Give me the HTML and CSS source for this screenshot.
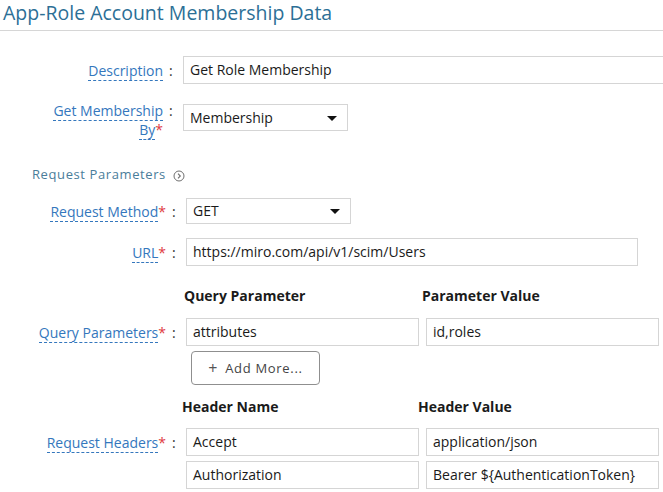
FILE: index.html
```html
<!DOCTYPE html>
<html>
<head>
<meta charset="utf-8">
<link rel="stylesheet" href="styles.css">
</head>
<body>
<div class="page">
  <h1 class="title">App-Role Account Membership Data</h1>

  <div class="section s1">
    <div class="row r-desc">
      <div class="lbl"><div class="lbl-text"><span class="u">Description</span></div><div class="colon">:</div></div>
      <div class="input wide">Get Role Membership</div>
    </div>
    <div class="row r-by top">
      <div class="lbl"><div class="lbl-text"><span class="u">Get Membership<br>By</span><span class="req">*</span></div><div class="colon">:</div></div>
      <div class="input select sel1">Membership<span class="caret"></span></div>
    </div>
  </div>

  <div class="subhead">Request Parameters
    <svg class="info" width="12" height="12" viewBox="0 0 12 12"><circle cx="6" cy="6" r="5" fill="none" stroke="#6f6f6f" stroke-width="1"/><polyline points="5,3.6 7.3,6 5,8.4" fill="none" stroke="#6f6f6f" stroke-width="1.1"/></svg>
  </div>

  <div class="section s2">
    <div class="row r-method">
      <div class="lbl"><div class="lbl-text"><span class="u">Request Method</span><span class="req">*</span></div><div class="colon">:</div></div>
      <div class="input select sel2">GET<span class="caret"></span></div>
    </div>
    <div class="row r-url">
      <div class="lbl"><div class="lbl-text"><span class="u">URL</span><span class="req">*</span></div><div class="colon">:</div></div>
      <div class="input url">https://miro.com/api/v1/scim/Users</div>
    </div>

    <div class="colheads ch-query">
      <div class="ch ch1">Query Parameter</div>
      <div class="ch ch2">Parameter Value</div>
    </div>
    <div class="row r-query top">
      <div class="lbl lbl-pair"><div class="lbl-text"><span class="u">Query Parameters</span><span class="req">*</span></div><div class="colon">:</div></div>
      <div class="pairs">
        <div class="pair">
          <div class="input half">attributes</div>
          <div class="input half">id,roles</div>
        </div>
        <button class="addmore"><span class="plus">+</span>Add More...</button>
      </div>
    </div>

    <div class="colheads ch-header">
      <div class="ch ch1">Header Name</div>
      <div class="ch ch2">Header Value</div>
    </div>
    <div class="row r-headers top">
      <div class="lbl lbl-pair"><div class="lbl-text"><span class="u">Request Headers</span><span class="req">*</span></div><div class="colon">:</div></div>
      <div class="pairs">
        <div class="pair">
          <div class="input half">Accept</div>
          <div class="input half">application/json</div>
        </div>
        <div class="pair">
          <div class="input half">Authorization</div>
          <div class="input half">Bearer ${AuthenticationToken}</div>
        </div>
      </div>
    </div>
  </div>
</div>
</body>
</html>
```
FILE: styles.css
```css
html, body {
  margin: 0;
  padding: 0;
  background: #ffffff;
  overflow: hidden;
}
body {
  font-family: "Open Sans", "Liberation Sans", sans-serif;
  color: #222222;
  width: 663px;
  height: 492px;
}
.page {
  width: 663px;
}
.title {
  margin: 0;
  padding: 0 0 4px 3px;
  font-size: 19.5px;
  line-height: 26px;
  font-weight: 400;
  color: #2c6f96;
  border-bottom: 1px solid #d6d6d6;
}
.row {
  display: flex;
  align-items: center;
}
.row.top {
  align-items: flex-start;
}
.lbl {
  display: flex;
  align-items: flex-start;
  flex: none;
}
.lbl-text {
  width: 163px;
  text-align: right;
  font-size: 14px;
  line-height: 19px;
  color: #3477bd;
}
.u {
  border-bottom: 1px dashed #3477bd;
  padding-bottom: 0;
}
.req {
  color: #e0393e;
}
.colon {
  width: 14px;
  padding-left: 6px;
  font-size: 14px;
  line-height: 19px;
  color: #333;
}
.input {
  box-sizing: border-box;
  height: 28px;
  border: 1px solid #d5d5d5;
  background: #fff;
  padding: 0 6px;
  font-size: 14px;
  line-height: 26px;
  color: #1a1a1a;
  white-space: nowrap;
  overflow: hidden;
  flex: none;
}
.wide {
  width: 500px;
}
.select {
  position: relative;
  width: 165px;
}
.sel1 {
  height: 27px;
  line-height: 25px;
}
.sel2 {
  height: 26px;
  line-height: 24px;
}
.caret {
  position: absolute;
  right: 10px;
  top: 50%;
  margin-top: -2px;
  width: 0;
  height: 0;
  border-left: 5px solid transparent;
  border-right: 5px solid transparent;
  border-top: 5px solid #111;
}
.url {
  width: 452px;
}
.s1 .r-desc {
  margin-top: 25px;
}
.s1 .r-by {
  margin-top: 20px;
  height: 27px;
}
.s1 .r-by .lbl {
  margin-top: -3px;
}
.subhead {
  margin-top: 34px;
  padding-left: 32px;
  font-size: 13px;
  line-height: 19px;
  letter-spacing: 0.6px;
  color: #4a7d9a;
  display: flex;
  align-items: center;
  gap: 7px;
}
.info {
  margin-top: 3px;
}
.s2 {
  padding-left: 3px;
}
.s2 .r-method {
  margin-top: 14px;
}
.s2 .r-url {
  margin-top: 14px;
}
.colheads {
  display: flex;
  font-size: 14px;
  line-height: 20px;
  font-weight: 700;
  color: #1b1b1b;
}
.ch-query {
  margin-top: 20px;
  padding-left: 181px;
}
.ch-query .ch1 {
  width: 238px;
}
.ch-header {
  margin-top: 12px;
  padding-left: 179px;
}
.ch-header .ch1 {
  width: 236px;
}
.r-query {
  margin-top: 12px;
}
.r-headers {
  margin-top: 11px;
}
.lbl-pair {
  height: 28px;
  align-items: center;
}
.pairs {
  display: flex;
  flex-direction: column;
  gap: 5px;
  align-items: flex-start;
}
.pair {
  display: flex;
  gap: 7px;
}
.half {
  width: 233px;
}
.addmore {
  margin-left: 5px;
  width: 129px;
  height: 34px;
  box-sizing: border-box;
  border: 1px solid #8f8f8f;
  border-radius: 4px;
  background: #fff;
  font-family: "Open Sans", "Liberation Sans", sans-serif;
  font-size: 13px;
  letter-spacing: 0.7px;
  color: #444;
  padding: 0;
  display: flex;
  align-items: center;
  justify-content: center;
}
.plus {
  font-size: 16px;
  margin-right: 7px;
  color: #555;
}
```
